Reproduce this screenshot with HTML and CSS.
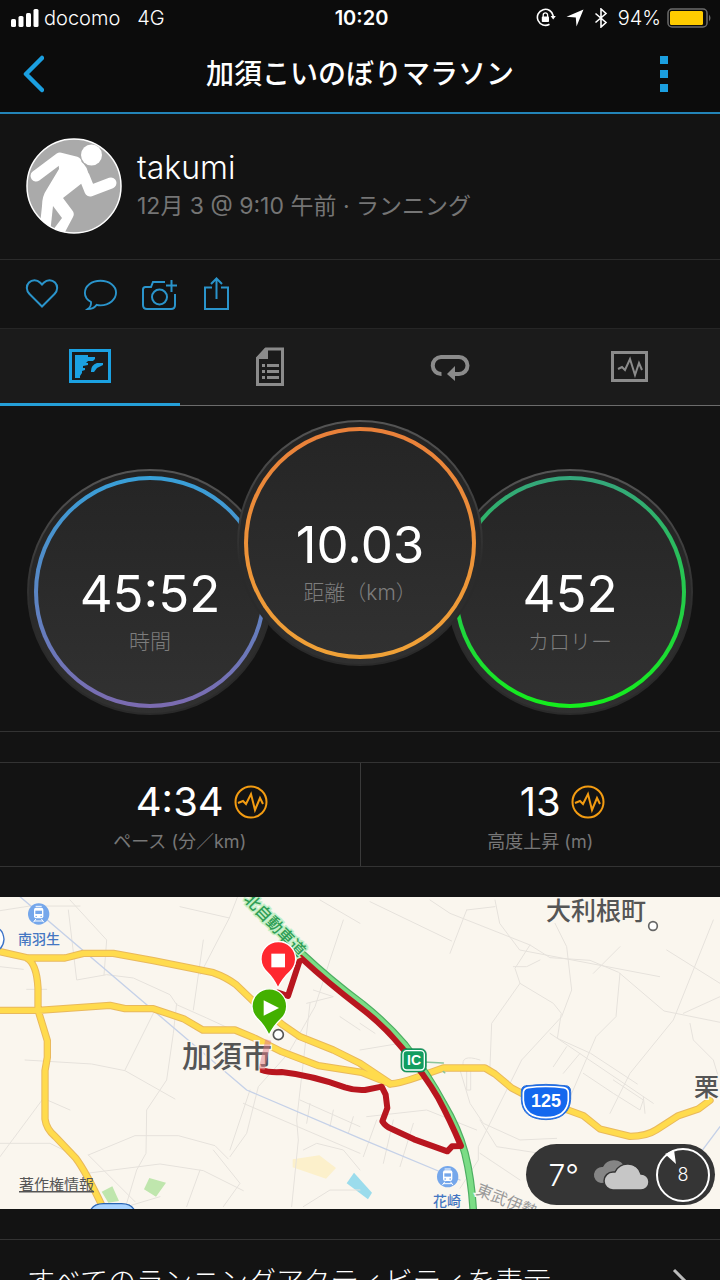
FILE: index.html
```html
<!DOCTYPE html>
<html lang="ja">
<head>
    <meta charset="UTF-8">
    <meta name="viewport" content="width=device-width, initial-scale=1.0">
    <title>加須こいのぼりマラソン</title>
    <link rel="stylesheet" href="styles.css">
</head>
<body>
    <div class="app">
        <div class="status">
            <div class="status-left">
                <svg class="signal" width="28" height="18" viewBox="0 0 28 18" fill="#fff">
                    <rect x="0" y="10" width="5" height="8" rx="1.5"/>
                    <rect x="7.5" y="7" width="5" height="11" rx="1.5"/>
                    <rect x="15" y="4" width="5" height="14" rx="1.5"/>
                    <rect x="22.5" y="0" width="5" height="18" rx="1.5"/>
                </svg>
                <span>docomo</span>
                <span class="net">4G</span>
            </div>
            <div class="clock">10:20</div>
            <div class="status-right">
                <svg width="20" height="20" viewBox="0 0 20 20">
                    <path d="M13.5 16.2A8 8 0 1 1 17.3 8" fill="none" stroke="#fff" stroke-width="1.6"/>
                    <path d="M14.6 8h5.2l-2.6 3.6z" fill="#fff"/>
                    <rect x="5.8" y="8.6" width="7.2" height="5.4" rx=".8" fill="#fff"/>
                    <path d="M7.2 9V7a2.2 2.2 0 0 1 4.4 0v2" fill="none" stroke="#fff" stroke-width="1.3"/>
                </svg>
                <svg width="18" height="18" viewBox="0 0 18 18"><path d="M17.5.5L10.500 17.5 9.8 8.4.5 7.7z" fill="#fff"/></svg>
                <svg width="14" height="20" viewBox="0 0 14 20"><path d="M1.5 5.5l10.5 9L7 19V1l5 4.500-10.500 9" fill="none" stroke="#fff" stroke-width="1.6"/></svg>
                <span>94%</span>
                <svg class="battery" width="45" height="20" viewBox="0 0 45 20">
                    <rect x="1" y="1" width="39" height="18" rx="4" fill="none" stroke="#6b6b6b" stroke-width="1.5"/>
                    <rect x="3" y="3" width="33" height="14" rx="1.5" fill="#ffcc00"/>
                    <path d="M42 6.5q3 3.5 0 7z" fill="#6b6b6b"/>
                </svg>
            </div>
        </div>

        <header class="header">
            <button class="icon-btn" aria-label="戻る">
                <svg width="24" height="38" viewBox="0 0 24 38"><path d="M22 3L6 19l16 16" fill="none" stroke="#1b9fe0" stroke-width="4.5" stroke-linecap="round" stroke-linejoin="round"/></svg>
            </button>
            <h1>加須こいのぼりマラソン</h1>
            <button class="icon-btn more" aria-label="メニュー">
                <svg width="8" height="36" viewBox="0 0 8 36" fill="#1b9fe0"><path d="M0 0h8v8H0zM0 14h8v8H0zM0 28h8v8H0z"/></svg>
            </button>
        </header>

        <section class="profile">
            <svg class="avatar" width="96" height="96" viewBox="0 0 96 96">
                <defs><clipPath id="avatarClip"><circle cx="48" cy="48" r="47"/></clipPath></defs>
                <circle cx="48" cy="48" r="47" fill="#aaa"/>
                <g clip-path="url(#avatarClip)">
                    <circle cx="65.500" cy="17" r="10.500" fill="#fff"/>
                    <path d="M10 38L34 20 50 24" fill="none" stroke="#fff" stroke-width="11" stroke-linecap="round" stroke-linejoin="round"/>
                    <path d="M58 38l6 15 21-8" fill="none" stroke="#fff" stroke-width="11" stroke-linecap="round" stroke-linejoin="round"/>
                    <path d="M32 15l17 5q11 5 13 14l-2 8-23 18 9 12q3 3 1 7L38 96H13l3-28q0-10 5-17l12-20z" fill="#fff"/>
                    <path d="M27 68l9 12L24 96z" fill="#aaa"/>
                </g>
                <circle cx="48" cy="48" r="47" fill="none" stroke="#fff" stroke-width="1.5"/>
            </svg>
            <div>
                <div class="name">takumi</div>
                <div class="meta">12月 3 @ 9:10 午前 · ランニング</div>
            </div>
        </section>

        <div class="actions">
            <button class="icon-btn" aria-label="いいね">
                <svg width="34" height="34" viewBox="0 0 34 34"><path d="M17 29.5L4.500 17C1 13.5 1 8.5 4 5.5s8-3 11 0l2 2 2-2c3-3 8-3 11 0s3 8-.5 11.5z"/></svg>
            </button>
            <button class="icon-btn" aria-label="コメント">
                <svg width="34" height="34" viewBox="0 0 36 34"><path d="M8.5 25.5C4 23 2 19.5 2 16 2 8.5 9 3 18.5 3S35 8.5 35 15.500 28 29 18.5 29q-2.500 0-4-.5Q11 33 5 33q4-3 3.500-7.500z"/></svg>
            </button>
            <button class="icon-btn" aria-label="写真を追加">
                <svg width="38" height="34" viewBox="0 0 38 34"><path d="M24 5H12L10 10H4.500Q2 10 2 12.5V28q0 4 4 4h24q4 0 4-4V17M25 8.500h11M30.5 3v12"/><circle cx="18.500" cy="20" r="7.5"/></svg>
            </button>
            <button class="icon-btn" aria-label="共有">
                <svg width="26" height="34" viewBox="0 0 26 34"><path d="M9 10.5H2V32h23V10.500h-7M13.5 22V1.500M8 7l5.500-5.500L19 7"/></svg>
            </button>
        </div>

        <nav class="tabs">
            <a class="tab active" href="#map" aria-label="概要">
                <svg width="42" height="34" viewBox="0 0 42 34"><path d="M1.5 1.5h39v31h-39z" fill="none" stroke="currentColor" stroke-width="3"/><path d="M6 6h13v2h7v2l-2 2h-5l-2 2h2v2l-5 1v2h2v2l-3 1v2l-2 3v2H6zM22 22q0-6 6-8h6v2l-6 3-3 4h-3z" fill="currentColor"/></svg>
            </a>
            <a class="tab" href="#detail" aria-label="詳細">
                <svg width="28" height="40" viewBox="0 0 28 40"><path d="M1.5 11v26.500h25V2H10z" fill="none" stroke="currentColor" stroke-width="3"/><path d="M0 11L9 1h3v11H0zM6 17h3v3H6zm5 0h12v3H11zM6 23h3v3H6zm5 0h12v3H11zM6 29h3v3H6zm5 0h12v3H11z" fill="currentColor"/></svg>
            </a>
            <a class="tab" href="#laps" aria-label="ラップ">
                <svg width="40" height="28" viewBox="0 0 40 28"><path d="M11.5 21A8.500 8.500 0 0 1 11 4h18a8.500 8.500 0 0 1 0 17h-5" fill="none" stroke="currentColor" stroke-width="4"/><path d="M17 21l8-8v15z" fill="currentColor"/></svg>
            </a>
            <a class="tab" href="#charts" aria-label="グラフ">
                <svg width="38" height="32" viewBox="0 0 38 32"><path d="M1.5 1.5h34v28h-34z" fill="none" stroke="currentColor" stroke-width="3"/><path d="M7 18l4-2 3 3 5-11 5 16 4-12 3 7" fill="none" stroke="currentColor" stroke-width="2"/></svg>
            </a>
        </nav>

        <section class="gauges">
            <div class="gauge time"><div class="ring"><span class="value">45:52</span><span class="label">時間</span></div></div>
            <div class="gauge distance"><div class="ring"><span class="value">10.03</span><span class="label">距離（km）</span></div></div>
            <div class="gauge calories"><div class="ring"><span class="value">452</span><span class="label">カロリー</span></div></div>
        </section>

        <section class="stats">
            <div class="stat">
                <div class="stat-value">4:34
                    <svg width="34" height="34" viewBox="0 0 34 34"><circle cx="17" cy="17" r="15.5"/><path d="M4 18l5-2 3 3 5-10 4 16 5-12 3 6"/></svg>
                </div>
                <div class="stat-label">ペース (分／km)</div>
            </div>
            <div class="stat">
                <div class="stat-value">13
                    <svg width="34" height="34" viewBox="0 0 34 34"><circle cx="17" cy="17" r="15.5"/><path d="M4 18l5-2 3 3 5-10 4 16 5-12 3 6"/></svg>
                </div>
                <div class="stat-label">高度上昇 (m)</div>
            </div>
        </section>

        <section class="map" id="map">
            <svg class="map-svg" viewBox="0 0 720 312">
                <g transform="translate(0 -7) scale(.33333)" fill="none" stroke-linejoin="round" stroke-linecap="round">
                    <!-- parks and water -->
                    <path d="M305 905l32-16 20 44-32 5zM448 864l50 14-30 42-36-22z" fill="#bfe6ad"/>
                    <path d="M878 808l80-12 50 38-30 32-100-34z" fill="#fcf0cb"/>
                    <path d="M1040 880l22-32 54 60-12 20z" fill="#9bdcec"/>
                    <!-- small streets -->
                    <g stroke="#e6e2dc" stroke-width="3">
                        <path d="M0 62l90-14h150M205 60l25 210 90-16 80 10 110 50 20 30 90 40 130 60M210 30l110 120-8 105M540 50l148 34 24-62M688 84l-88 170M610 150l-30 210M0 230l70 8M80 298h60M460 370l-85 170M75 510l200 12 100 20 150 85M530 340l-10 90-20 140-60 90-2 130-28 50-30 100M130 625l80 35M130 625L0 800M0 760h90l60 0 60 30M265 795l140-58 130 0 110 30 40 40M260 850l220-28 130 20 120 60M265 795l140 140M690 800l50-70 35-140 90-100 80-140 45-140 40-120M750 600l-60 180M730 640l350 150M930 340l-40 350 5 60-20 200M1080 100L960 30M940 300l60 20-80 20M1080 420l-60-40M900 630l180 80M930 640l-10 60M1000 660l-10 50M1060 680l-15 50M910 780l40-20 80 20 50 60M480 920l-100 30M600 840l-40 110M640 780l80 100-50 70M1080 900h-90l-80 50"/>
                        <path d="M1110 35l245 118M1400 60l-50 130M1290 30l60 40 240 95 60 38 120 8 86 36 136 116 268 54M1400 60l85-10M1485 30l14 70 60 80 420 80M1590 165l-45 70 15 45 100 60 24 30-12 75 100 45 140 92M1560 280l-85 120-5 130M1665 100l35 70 15 130-30 80-120 130-130 260 0 40-55 85M1780 250l80-80M1860 250l-12 130-60 60-90 210-15 0M2140 90l-120 300-130 160-60 120M2050 370l110-50M2070 400l10 50 60 60 15 50M1650 430l310 210M1700 470l-40 60M1740 490l-50 60M1840 570l90 60-10 30-80-50-90-60M1930 620l5 50M1080 400l45 30M1200 460l-120 20M1380 540l30 100 40 60 110 50 110-5M1390 530q-10-40 50-20M1400 540v60h12v-60M1440 690l50 80 130 20M1440 790l120 80M1100 680l180-20 150 60M1180 690l-30 130M1240 700l-40 130M1130 690l-40 110M2000 180l160 100M1540 230h40l40-20"/>
                    </g>
                    <path d="M60 20l680 580 340 145 300 125M2160 710l-60 80" stroke="#c5d1e8" stroke-width="4"/>
                    <!-- main roads -->
                    <g stroke="#e9b95c" stroke-width="22">
                        <path id="roadsWest" d="M0 185l85 19h110l55-14h90l120 22 180 36q40 14 68 36l50 48 92 74 50 34 100 40 80 40 90 60M0 361h115l215-15 45 10h85l90 30 58 34h97l60 25 80 40 110 42 130 20 85 34M80 204q30 16 34 90v66l28 92v50l-7 40v145q4 30 30 52l62 65q30 40 80 145"/>
                        <path id="roadsEast" d="M1170 582q30-2 80-20l80-28h125l30 18 50 42 50 26M1690 655l60 22 50 40 90 22q50 0 80-20l65-42 60-20 35-26"/>
                    </g>
                    <g stroke="#ffdb4d" stroke-width="16">
                        <path d="M0 185l85 19h110l55-14h90l120 22 180 36q40 14 68 36l50 48 92 74 50 34 100 40 80 40 90 60M0 361h115l215-15 45 10h85l90 30 58 34h97l60 25 80 40 110 42 130 20 85 34M80 204q30 16 34 90v66l28 92v50l-7 40v145q4 30 30 52l62 65q30 40 80 145"/>
                        <path d="M1170 582q30-2 80-20l80-28h125l30 18 50 42 50 26M1690 655l60 22 50 40 90 22q50 0 80-20l65-42 60-20 35-26"/>
                    </g>
                    <!-- expressway -->
                    <path d="M905 190Q990 270 1087 342 1160 400 1215 465 1285 555 1330 640 1375 715 1395 790 1415 870 1420 965" stroke="#4dae62" stroke-width="23"/>
                    <path d="M905 190Q990 270 1087 342 1160 400 1215 465 1285 555 1330 640 1375 715 1395 790 1415 870 1420 965" stroke="#7bdc85" stroke-width="16"/>
                    <path d="M1270 516l60 3M1330 545l4 3" stroke="#8bc49b" stroke-width="5"/>
                    <!-- route -->
                    <path d="M785 540q20 8 60 6 90 10 190 46 30 10 60 8l50-10 12 24 5 40-15 40q10 16 30 24l65 30 100 36 14-15 27-1Q1350 690 1315 625 1275 555 1205 472 1150 405 1080 352 985 280 902 203l-38 115-30-10" stroke="#b8161f" stroke-width="18"/>
                    <!-- route shields -->
                    <path d="M-20 118q28-10 32 30-2 30-32 40z" fill="#fff" stroke="#3b72c8" stroke-width="4"/>
                    <path d="M270 965q8-24 40-24h55q32 0 40 24z" fill="#a9d3ff" stroke="#2864b4" stroke-width="4"/>
                    <path d="M1580 587q-16 0-16 18v23q2 60 74 61 70-1 74-61v-23q0-18-16-18-58-8-116 0z" fill="#1468ee" stroke="#2c6fd6" stroke-width="3"/>
                    <path d="M1584 593q-14 2-14 16v22q4 51 68 52 62-1 67-52v-22q0-14-14-16-54-7-107 0z" stroke="#fff" stroke-width="5"/>
                    <rect x="1203" y="476" width="76" height="70" rx="16" fill="#129d60" stroke="#12804f" stroke-width="2"/>
                    <rect x="1209" y="482" width="64" height="58" rx="11" stroke="#fff" stroke-width="4"/>
                    <!-- town dots -->
                    <circle cx="1959" cy="108" r="13" fill="#fff" stroke="#666" stroke-width="5"/>
                    <circle cx="835" cy="434" r="15" fill="#fff" stroke="#555" stroke-width="5"/>
                    <!-- stations -->
                    <g id="station">
                        <circle cx="116" cy="72" r="32" fill="#75a7eb"/>
                        <rect x="102" y="53" width="28" height="32" rx="6" fill="#fff"/>
                        <path d="M106 62h20v10h-20z" fill="#75a7eb"/>
                        <path d="M108 49h16M107 88l-6 8M125 88l6 8M104 93h24" stroke="#fff" stroke-width="3"/>
                        <path d="M108 79h1M123 79h1" stroke="#75a7eb" stroke-width="4"/>
                    </g>
                    <use href="#station" x="1227" y="788"/>
                </g>
                <text class="town" x="182" y="170">加須市</text>
                <text class="town-sm" x="546" y="23">大利根町</text>
                <text class="town-sm" x="694" y="199">栗</text>
                <text class="station-name" x="18" y="47">南羽生</text>
                <text class="station-name" x="433" y="309">花崎</text>
                <text class="highway" transform="translate(243 3) rotate(46)">北自動車道</text>
                <text class="rail" transform="translate(475 297) rotate(22)">東武伊勢</text>
                <text class="legal" x="19" y="293">著作権情報</text>
                <text class="route-no" x="546" y="210">125</text>
                <text class="ic" x="414" y="168">IC</text>
                <g transform="translate(0 -7) scale(.33333)" stroke="#fff" stroke-width="4">
                    <path d="M805 450l-20 88" stroke="#e07c86" stroke-width="18" opacity=".5"/>
                    <!-- finish and start pins -->
                    <path d="M834 294q-14-30-34-49a52 52 0 1 1 70 0q-22 20-36 49z" fill="#ff2830"/>
                    <path d="M814 191h41v41h-41z" fill="#fff" stroke="none"/>
                    <path d="M807 436q-14-30-34-49a52 52 0 1 1 70 0q-22 20-36 49z" fill="#43b000"/>
                    <path d="M791 331v46l46-23z" fill="#fff" stroke="none"/>
                </g>
            </svg>
            <div class="weather">
                <span class="temp">7°</span>
                <svg width="56" height="32" viewBox="0 0 56 32">
                    <path d="M8 24a8 8 0 0 1 2-16A12 12 0 0 1 32 9V22z" fill="#858585"/>
                    <path d="M20 31a9 9 0 0 1 0-18h2a14 14 0 0 1 26 2 8 8 0 0 1 0 16z" fill="#c6c6c6" stroke="#353535" stroke-width="1.5"/>
                </svg>
                <span class="wind">
                    <svg width="56" height="56" viewBox="0 0 56 56"><circle cx="28" cy="28" r="26" fill="none" stroke="#fff" stroke-width="2"/><path d="M10 7l9-4 2 14z" fill="#fff"/></svg>
                    <b>8</b>
                </span>
            </div>
        </section>

        <a class="all-link" href="#all">
            <span>すべてのランニングアクティビティを表示</span>
            <svg width="16" height="28" viewBox="0 0 16 28"><path d="M2 2l12 12L2 26" fill="none" stroke="#bbb" stroke-width="3"/></svg>
        </a>
    </div>
</body>
</html>
```
FILE: styles.css
```css
*{
    margin: 0;
    padding: 0;
    box-sizing: border-box;
}
body {
    background-color: #131313;
    color: #fff;
    font-family: Inter, "Noto Sans CJK JP", sans-serif;
    font-weight: 300;
}
svg {
    display: block;
    flex: none;
}
a {
    color: inherit;
    text-decoration: none;
}
.app {
    height: 100vh;
    overflow: hidden;
}
.icon-btn {
    display: block;
    border: 0;
    background: none;
}

/* status bar */
.status {
    display: grid;
    grid-template-columns: 1fr auto 1fr;
    align-items: center;
    height: 36px;
    padding: 0 8px 0 11px;
    background-color: #0c0c0c;
    font-size: 20px;
    line-height: 24px;
}
.status-left,
.status-right {
    display: flex;
    align-items: center;
}
.status-left {
    gap: 5px;
}
.net {
    margin-left: 12px;
}
.clock {
    font-weight: 600;
}
.status-right {
    justify-content: flex-end;
    gap: 10px;
}
.battery {
    margin-left: -4px;
}

/* title bar */
.header {
    display: grid;
    grid-template-columns: 1fr auto 1fr;
    align-items: center;
    height: 78px;
    padding: 0 20px;
    background-color: #0c0c0c;
    border-bottom: 2px solid #2384b8;
}
.header h1 {
    font-size: 28px;
    font-weight: 500;
    line-height: 40px;
}
.header .icon-btn {
    width: 24px;
}
.header .more {
    justify-self: end;
    width: 8px;
    margin-right: 32px;
}

/* runner */
.profile {
    display: flex;
    align-items: center;
    gap: 15px;
    height: 146px;
    padding: 0 26px 2px;
    border-bottom: 1px solid #2b2b2b;
}
.name {
    font-size: 32px;
    line-height: 40px;
}
.meta {
    font-size: 23px;
    font-weight: 400;
    line-height: 36px;
    color: #757575;
}
.actions {
    display: flex;
    align-items: center;
    gap: 24px;
    height: 68px;
    padding: 0 25px;
}
.actions svg {
    fill: none;
    stroke: #2a94cb;
    stroke-width: 2;
}

/* tabs */
.tabs {
    display: flex;
    height: 78px;
    background-color: #1b1b1b;
    border-top: 1px solid #262626;
}
.tab {
    display: flex;
    flex: 1;
    align-items: center;
    justify-content: center;
    border-bottom: 1px solid #6c6c6c;
    color: #8b8b8b;
}
.tab.active {
    color: #1ba1e2;
    border-bottom: 3px solid #259fd8;
}

/* gauges */
.gauges {
    display: flex;
    align-items: flex-end;
    justify-content: center;
    padding: 14px 0 16px;
    border-bottom: 1px solid #333;
}
.gauge {
    width: 246px;
    height: 246px;
    padding: 5px;
    border: 2px solid transparent;
    border-radius: 50%;
    background: linear-gradient(#222, #303030) padding-box, linear-gradient(#555, #2a2a2a 60%) border-box;
}
.gauge + .gauge {
    margin-left: -36px;
}
.distance {
    position: relative;
    margin-bottom: 49px;
}
.ring {
    display: flex;
    flex-direction: column;
    align-items: center;
    height: 100%;
    padding-top: 84px;
    border: 4px solid transparent;
    border-radius: 50%;
}
.time .ring {
    background: linear-gradient(#252525, #313131) padding-box, linear-gradient(#38a0d8, #7c6bb0) border-box;
}
.distance .ring {
    background: linear-gradient(#252525, #313131) padding-box, linear-gradient(#e9803a, #f0a237) border-box;
}
.calories .ring {
    background: linear-gradient(#252525, #313131) padding-box, linear-gradient(#35a67c, #14ee1c) border-box;
}
.value {
    font-size: 51px;
    font-weight: 400;
    line-height: 60px;
}
.label {
    margin-top: 6px;
    font-size: 21px;
    line-height: 24px;
    color: #7d7d7d;
}

/* pace and climb */
.stats {
    display: flex;
    height: 105px;
    margin: 30px 0;
    border-top: 1px solid #333;
    border-bottom: 1px solid #333;
}
.stat {
    flex: 1;
    padding-top: 17px;
    text-align: center;
}
.stat:first-child {
    border-right: 1px solid #3a3a3a;
}
.stat-value {
    display: flex;
    align-items: center;
    justify-content: center;
    gap: 10px;
    padding-left: 44px;
    font-size: 40px;
    font-weight: 400;
    line-height: 44px;
}
.stat-value svg {
    fill: none;
    stroke: #f39c12;
    stroke-width: 2;
}
.stat-label {
    margin-top: 6px;
    font-size: 18px;
    font-weight: 400;
    line-height: 24px;
    color: #777;
}

/* map */
.map {
    position: relative;
    background-color: #faf6ee;
}
.map-svg {
    width: 100%;
    height: auto;
}
.map text {
    font-weight: 500;
    paint-order: stroke;
    stroke: #faf6ee;
    stroke-width: 3px;
}
.town {
    font-size: 30px;
    fill: #555;
}
.map .town-sm {
    font-size: 25px;
    fill: #555;
}
.map .station-name {
    font-size: 14px;
    fill: #4577c2;
}
.map .highway {
    font-size: 16px;
    fill: #2f9e55;
    stroke: #c4efc6;
}
.map .rail {
    font-size: 16px;
    font-weight: 400;
    fill: #999;
}
.map .legal {
    font-size: 15px;
    font-weight: 400;
    fill: #555;
    stroke: none;
    text-decoration: underline;
}
.map .route-no,
.map .ic {
    font-family: "Liberation Sans", sans-serif;
    font-size: 18px;
    font-weight: 700;
    fill: #fff;
    stroke: none;
    text-anchor: middle;
}
.map .ic {
    font-size: 14px;
}
.weather {
    position: absolute;
    right: 5px;
    bottom: 4px;
    display: flex;
    align-items: center;
    justify-content: flex-end;
    width: 189px;
    height: 61px;
    padding-right: 4px;
    border-radius: 31px;
    background-color: #353535;
}
.temp {
    margin-right: 14px;
    font-size: 30px;
}
.wind {
    display: grid;
    place-items: center;
    margin-left: 6px;
}
.wind svg,
.wind b {
    grid-area: 1 / 1;
}
.wind b {
    font-size: 18px;
    font-weight: 300;
}

/* link to the list */
.all-link {
    display: flex;
    align-items: center;
    justify-content: space-between;
    height: 84px;
    margin-top: 30px;
    padding: 0 32px 0 27px;
    border-top: 1px solid #333;
    font-size: 28px;
    line-height: 40px;
}
```
